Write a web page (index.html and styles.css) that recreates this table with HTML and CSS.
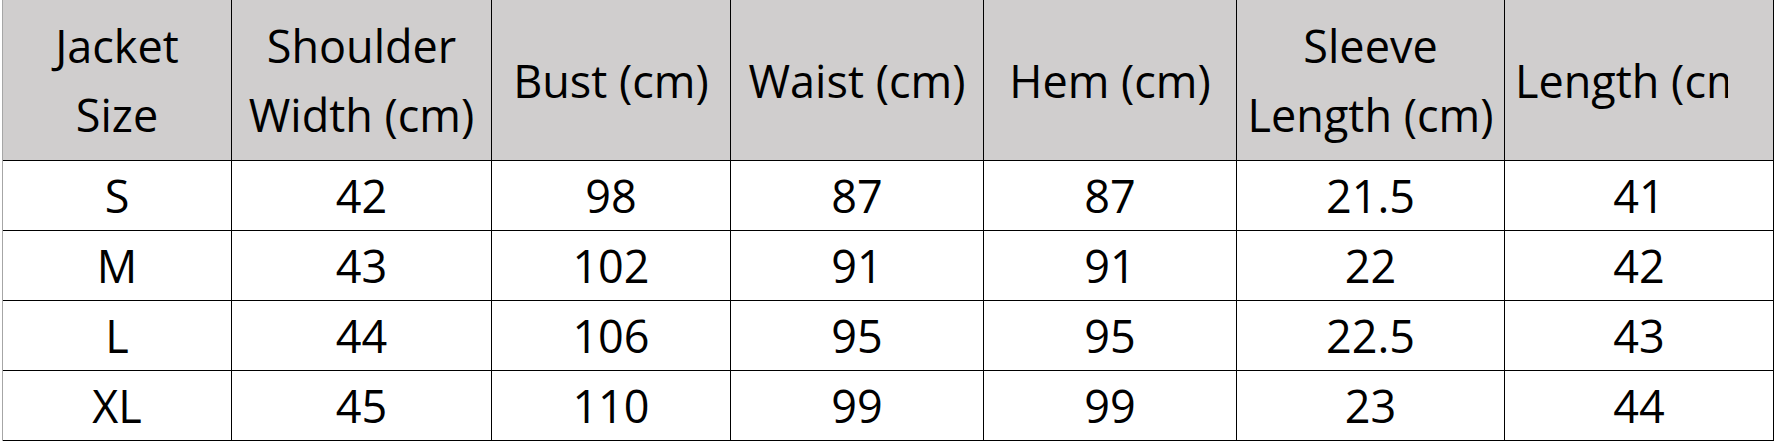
FILE: index.html
```html
<!DOCTYPE html>
<html lang="en">
<head>
<meta charset="utf-8">
<title>Jacket Size Chart</title>
<link rel="stylesheet" href="styles.css">
</head>
<body>
<div class="sheet">
  <div class="cell head">Jacket<br>Size</div>
  <div class="cell head">Shoulder<br>Width (cm)</div>
  <div class="cell head">Bust (cm)</div>
  <div class="cell head">Waist (cm)</div>
  <div class="cell head">Hem (cm)</div>
  <div class="cell head">Sleeve<br>Length (cm)</div>
  <div class="cell head clip"><span class="clip-text">Length (cm)</span></div>

  <div class="cell">S</div><div class="cell">42</div><div class="cell">98</div><div class="cell">87</div><div class="cell">87</div><div class="cell">21.5</div><div class="cell">41</div>
  <div class="cell">M</div><div class="cell">43</div><div class="cell">102</div><div class="cell">91</div><div class="cell">91</div><div class="cell">22</div><div class="cell">42</div>
  <div class="cell">L</div><div class="cell">44</div><div class="cell">106</div><div class="cell">95</div><div class="cell">95</div><div class="cell">22.5</div><div class="cell">43</div>
  <div class="cell">XL</div><div class="cell">45</div><div class="cell">110</div><div class="cell">99</div><div class="cell">99</div><div class="cell">23</div><div class="cell">44</div>
</div>
</body>
</html>
```

FILE: styles.css
```css
html, body {
  margin: 0;
  padding: 0;
  background: #ffffff;
}

body {
  padding-left: 2px;
  font-family: "Open Sans", Lato, "Liberation Sans", sans-serif;
  font-weight: 500;
  color: #000000;
}

.sheet {
  display: grid;
  grid-template-columns: 229px 260px 239px 253px 253px 268px 269px;
  grid-template-rows: 161px 70px 70px 70px 70px;
  border-left: 1px solid #a6a6a6;
  width: max-content;
}

.cell {
  display: flex;
  align-items: center;
  justify-content: center;
  text-align: center;
  border-right: 1px solid #000000;
  border-bottom: 1px solid #000000;
  font-size: 45px;
  line-height: 1.36;
  padding-top: 1px;
  box-sizing: border-box;
  white-space: nowrap;
  overflow: hidden;
}

.head {
  background: #d0cece;
  line-height: 69px;
  padding-top: 0;
}

.clip {
  justify-content: flex-start;
  padding-left: 10px;
}

.clip-text {
  display: block;
  width: 213px;
  overflow: hidden;
  white-space: nowrap;
  text-align: left;
}
```
